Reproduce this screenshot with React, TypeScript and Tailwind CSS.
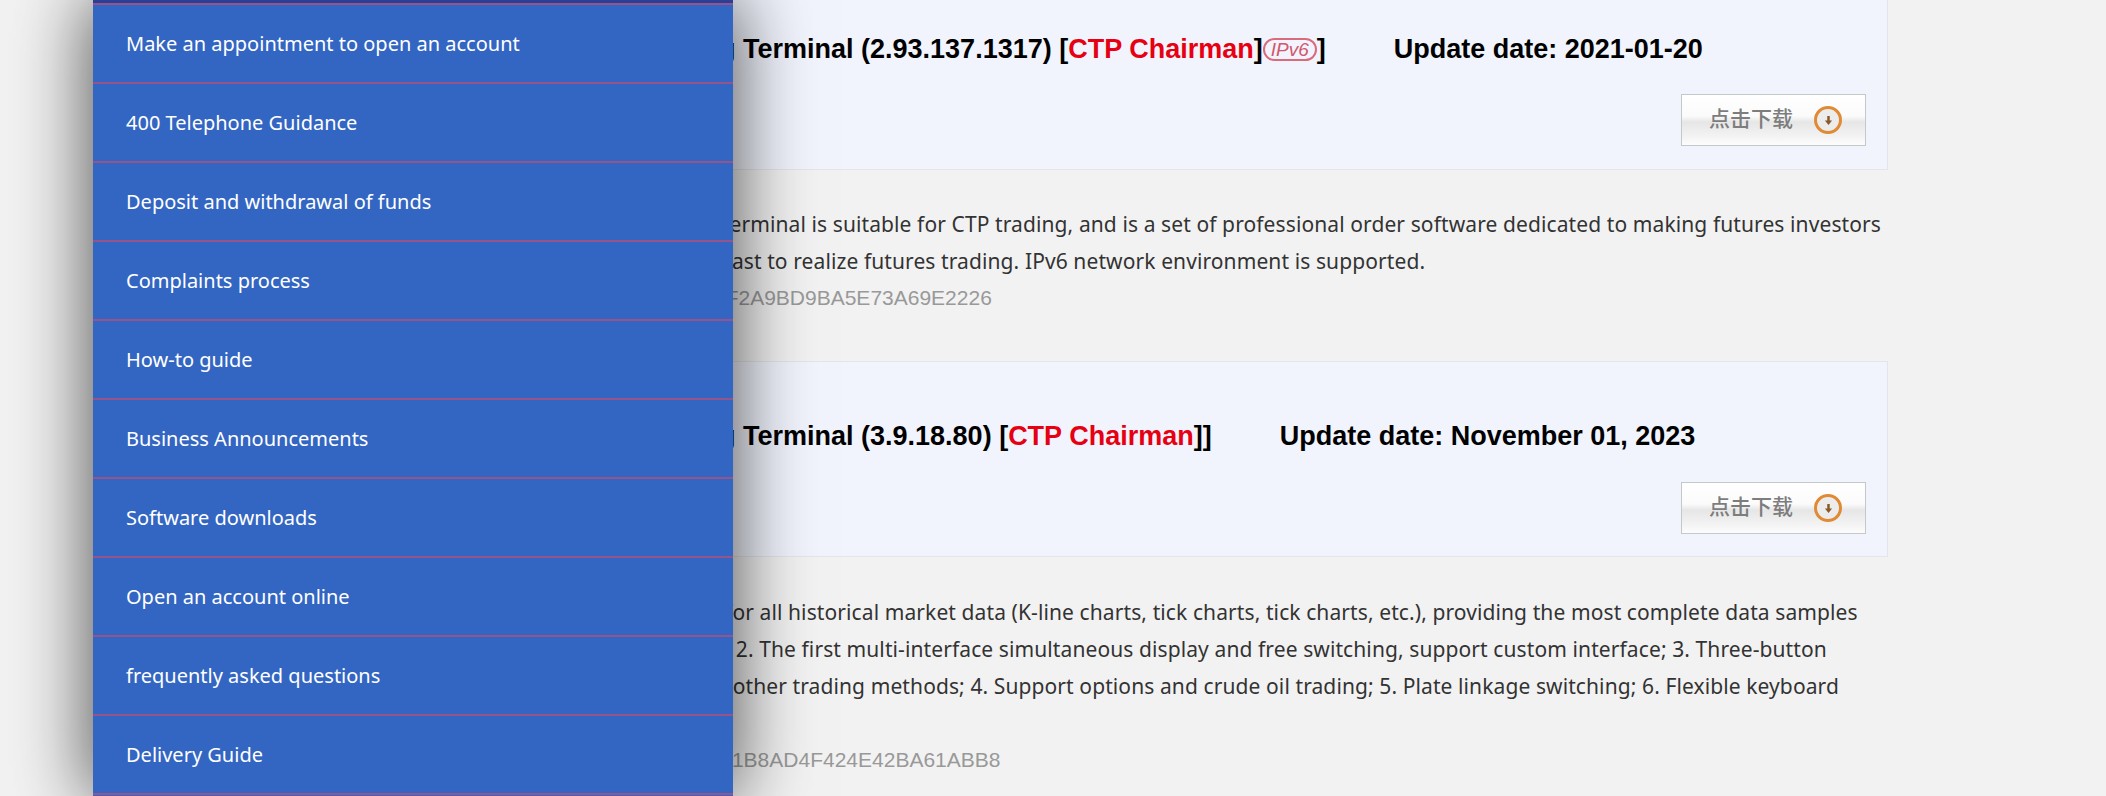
const menuItems = [
  "Make an appointment to open an account",
  "400 Telephone Guidance",
  "Deposit and withdrawal of funds",
  "Complaints process",
  "How-to guide",
  "Business Announcements",
  "Software downloads",
  "Open an account online",
  "frequently asked questions",
  "Delivery Guide",
];

function DownloadButton() {
  return (
    <button className="flex h-[52px] w-[185px] items-center border border-[#c4c8c8] bg-[linear-gradient(#ffffff_0%,#fbfbfb_42%,#e6e6e6_54%,#f4f4f4_85%,#fdfdfd_100%)] pl-[27px] text-[21px] leading-none text-[#7d7d7d] [font-family:'Noto_Sans_CJK_SC',sans-serif]">
      <span className="pb-[6px] font-medium">点击下载</span>
      <span className="ml-[21px] flex h-[28px] w-[28px] items-center justify-center rounded-full border-[3px] border-[#e08a35] bg-[#ececec]">
        <svg width="9" height="11" viewBox="0 0 10 12">
          <path d="M3.6 1h2.8v5H9L5 11 1 6h2.6z" fill="#8a5a2a" />
        </svg>
      </span>
    </button>
  );
}

export default function App() {
  return (
    <div className="relative h-[796px] w-[2106px] overflow-hidden bg-[#f2f2f2] text-[21px] [font-family:'Noto_Sans',sans-serif]">
      <div className="ml-[133px] w-[1755px]">
        {/* first package */}
        <section className="-mt-[26px] h-[196px] border border-[#e3e5e8] bg-[#f1f4fd] pt-[55px] pr-[21px]">
          <h3 className="ml-[414px] whitespace-nowrap text-[27px] leading-[38px] font-bold text-black [font-family:'Liberation_Sans',sans-serif]">
            Kuaiqi Trading Terminal (2.93.137.1317) [<span className="text-[#e60012]">CTP Chairman</span>]
            <span className="inline-flex h-[23px] w-[54px] items-center justify-center rounded-full border-2 border-[#d96b7d] align-[2px] text-[19px] leading-none font-normal text-[#d4566c] italic">
              IPv6
            </span>
            ]<span className="ml-[68px]">Update date: 2021-01-20</span>
          </h3>
          <div className="mt-[26px] flex justify-end">
            <DownloadButton />
          </div>
        </section>
        <div className="mt-[36px] leading-[37px] tracking-[0.1px] text-[#333]">
          <p className="ml-[395px] whitespace-nowrap">
            The Kuaiqi Trading Terminal is suitable for CTP trading, and is a set of professional order software dedicated to making futures investors
          </p>
          <p className="ml-[374px] whitespace-nowrap">
            more convenient and fast to realize futures trading. IPv6 network environment is supported.
          </p>
          <p className="-mt-[1px] ml-[344px] whitespace-nowrap tracking-normal text-[#999] [font-family:'Liberation_Sans',sans-serif]">
            MD5: 93C4A1E07D5B8C2F2A9BD9BA5E73A69E2226
          </p>
        </div>

        {/* second package */}
        <section className="mt-[45px] h-[196px] border border-[#e3e5e8] bg-[#f1f4fd] pt-[55px] pr-[21px]">
          <h3 className="ml-[414px] whitespace-nowrap text-[27px] leading-[38px] font-bold text-black [font-family:'Liberation_Sans',sans-serif]">
            Kuaiqi Trading Terminal (3.9.18.80) [<span className="text-[#e60012]">CTP Chairman</span>]]
            <span className="ml-[68px]">Update date: November 01, 2023</span>
          </h3>
          <div className="mt-[27px] flex justify-end">
            <DownloadButton />
          </div>
        </section>
        <div className="mt-[37px] leading-[37px] tracking-[0.1px] text-[#333]">
          <p className="ml-[432px] whitespace-nowrap">
            1. Full coverage for all historical market data (K-line charts, tick charts, tick charts, etc.), providing the most complete data samples
          </p>
          <p className="ml-[427px] whitespace-nowrap">
            for your analysis; 2. The first multi-interface simultaneous display and free switching, support custom interface; 3. Three-button
          </p>
          <p className="ml-[418px] whitespace-nowrap">
            order placing and other trading methods; 4. Support options and crude oil trading; 5. Plate linkage switching; 6. Flexible keyboard
          </p>
          <p className="h-[37px]" />
          <p className="-mt-[1px] ml-[390px] whitespace-nowrap tracking-normal text-[#999] [font-family:'Liberation_Sans',sans-serif]">
            MD5: 7E30C9D2A6F41B8AD4F424E42BA61ABB8
          </p>
        </div>
      </div>

      {/* slide-out menu */}
      <nav className="absolute top-0 bottom-0 left-[93px] w-[640px] bg-[#3366c2] shadow-[0_0_70px_4px_rgba(0,0,0,0.65)]">
        <div className="h-[3px] bg-[#2a3f95]" />
        <ul className="border-t-2 border-[#96558a]">
          {menuItems.map((item) => (
            <li key={item} className="flex h-[79px] items-center border-b-2 border-[#96558a] pl-[33px] text-[20px] text-white">
              {item}
            </li>
          ))}
        </ul>
      </nav>
    </div>
  );
}
